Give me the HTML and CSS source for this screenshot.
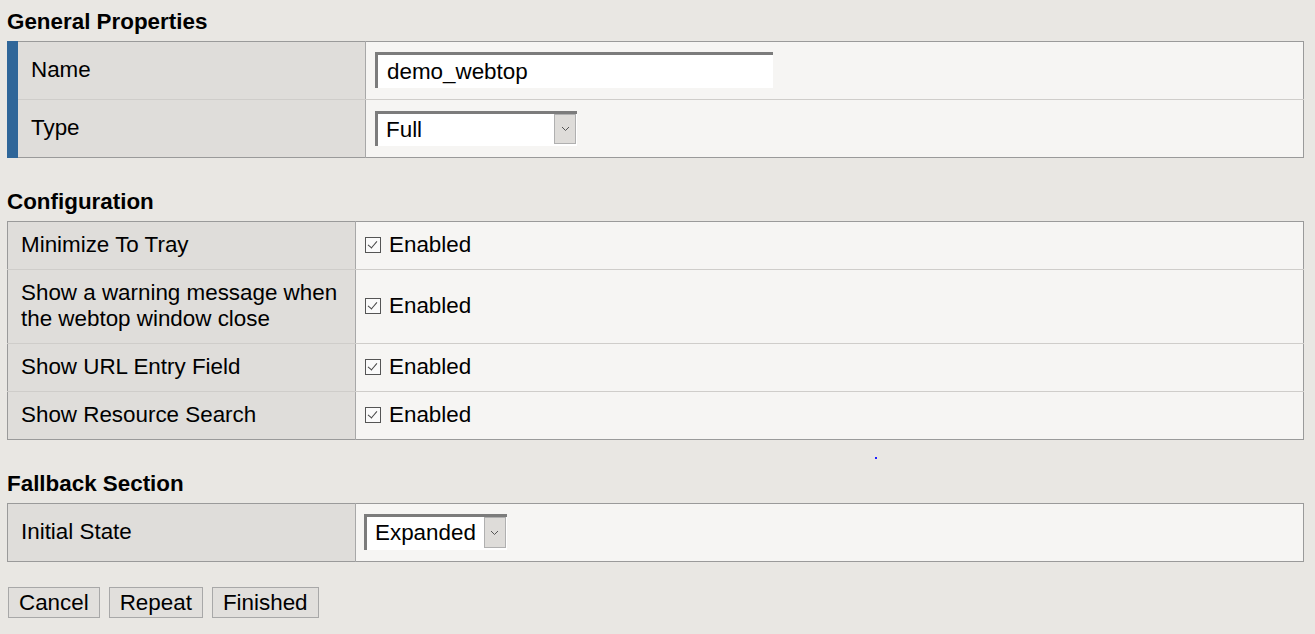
FILE: index.html
```html
<!DOCTYPE html>
<html lang="en">
<head>
  <meta charset="UTF-8" />
  <title>Webtop Properties</title>
  <link rel="stylesheet" href="styles.css">
</head>
<body>
  <main class="page">
    <h2>General Properties</h2>
    <table class="props props-general">
      <tr>
        <td class="label required">Name</td>
        <td class="value"><input type="text" class="text-input" value="demo_webtop" /></td>
      </tr>
      <tr>
        <td class="label required">Type</td>
        <td class="value">
          <span class="select select-type"><span class="select-text">Full</span><span class="select-arrow"><svg width="9" height="6" viewBox="0 0 9 6"><path d="M1 1l3.5 3.5L8 1" fill="none" stroke="#555" stroke-width="1"/></svg></span></span>
        </td>
      </tr>
    </table>

    <h2>Configuration</h2>
    <table class="props props-config">
      <tr>
        <td class="label">Minimize To Tray</td>
        <td class="value"><span class="check"></span>Enabled</td>
      </tr>
      <tr>
        <td class="label">Show a warning message when<br>the webtop window close</td>
        <td class="value"><span class="check"></span>Enabled</td>
      </tr>
      <tr>
        <td class="label">Show URL Entry Field</td>
        <td class="value"><span class="check"></span>Enabled</td>
      </tr>
      <tr>
        <td class="label">Show Resource Search</td>
        <td class="value"><span class="check"></span>Enabled</td>
      </tr>
    </table>

    <h2>Fallback Section</h2>
    <table class="props props-config">
      <tr class="tall">
        <td class="label">Initial State</td>
        <td class="value">
          <span class="select select-state"><span class="select-text">Expanded</span><span class="select-arrow"><svg width="9" height="6" viewBox="0 0 9 6"><path d="M1 1l3.5 3.5L8 1" fill="none" stroke="#555" stroke-width="1"/></svg></span></span>
        </td>
      </tr>
    </table>

    <div class="actions">
      <button>Cancel</button>
      <button>Repeat</button>
      <button>Finished</button>
    </div>

    <span class="dot"></span>
  </main>
</body>
</html>
```

FILE: styles.css
```css
body { margin: 0; background: #e9e7e3; font-family: "Liberation Sans", Arial, sans-serif; font-size: 22.4px; color: #000; }
.page { position: relative; padding: 8px 11px 0 7px; }

h2 { font-size: 22.4px; font-weight: bold; line-height: 27px; margin: 0 0 6px 0; }
table + h2 { margin-top: 30px; }

.props { width: 100%; border-collapse: collapse; border: 1px solid #9a9a9a; }
.props td { padding: 10px 13px 11px 13px; line-height: 26px; border-bottom: 1px solid #cfcdca; vertical-align: middle; }
.props tr:last-child td { border-bottom: none; }
.props .label { background: #dfddda; border-right: 1px solid #a8a8a8; }
.props .value { background: #f6f5f3; padding-left: 9px; }

.props-general .label { width: 321px; }
.props-general td { height: 36px; }
.props-general .required { border-left: 11px solid #2f6699; }
.props-config .label { width: 321px; }
.props-config .tall td { height: 34px; }

.text-input { width: 386px; height: 33px; box-sizing: content-box; padding: 0 0 0 9px; margin: 0; border: 3px solid; border-color: #7c7c7c #fff #fff #7c7c7c; border-bottom-width: 0; border-right-width: 0; background: #fff; font: inherit; color: #000; outline: none; display: block; }

.select { display: flex; width: fit-content; align-items: stretch; background: #fff; border-top: 3px solid #7c7c7c; border-left: 3px solid #7c7c7c; }
.select-text { padding: 0 8px; line-height: 32px; }
.select-type { width: 199px; height: 32px; }
.select-type .select-text { flex: 1; }
.select-state { height: 33px; margin-left: -1px; }
.select-arrow { width: 20px; margin: 0 1px 2px 0; background: #dedcd9; border: 1px solid #b0b0b0; display: flex; align-items: center; justify-content: center; }

.check { display: inline-block; width: 14px; height: 14px; border: 1px solid #555; background: #fafafa; margin-right: 8px; vertical-align: -1px; position: relative; }
.check::after { content: ""; position: absolute; left: 4px; top: 1px; width: 4px; height: 8px; border: solid #444; border-width: 0 1px 1px 0; transform: rotate(40deg); }

.actions { display: flex; gap: 9px; margin-top: 25px; padding-left: 1px; }
.actions button { height: 31px; padding: 0 10px; background: #e1dfdc; border: 1px solid #a8a8a8; font: inherit; color: #000; line-height: 27px; }

.dot { position: absolute; left: 875px; top: 457px; width: 2px; height: 2px; background: #2020ff; }
```
